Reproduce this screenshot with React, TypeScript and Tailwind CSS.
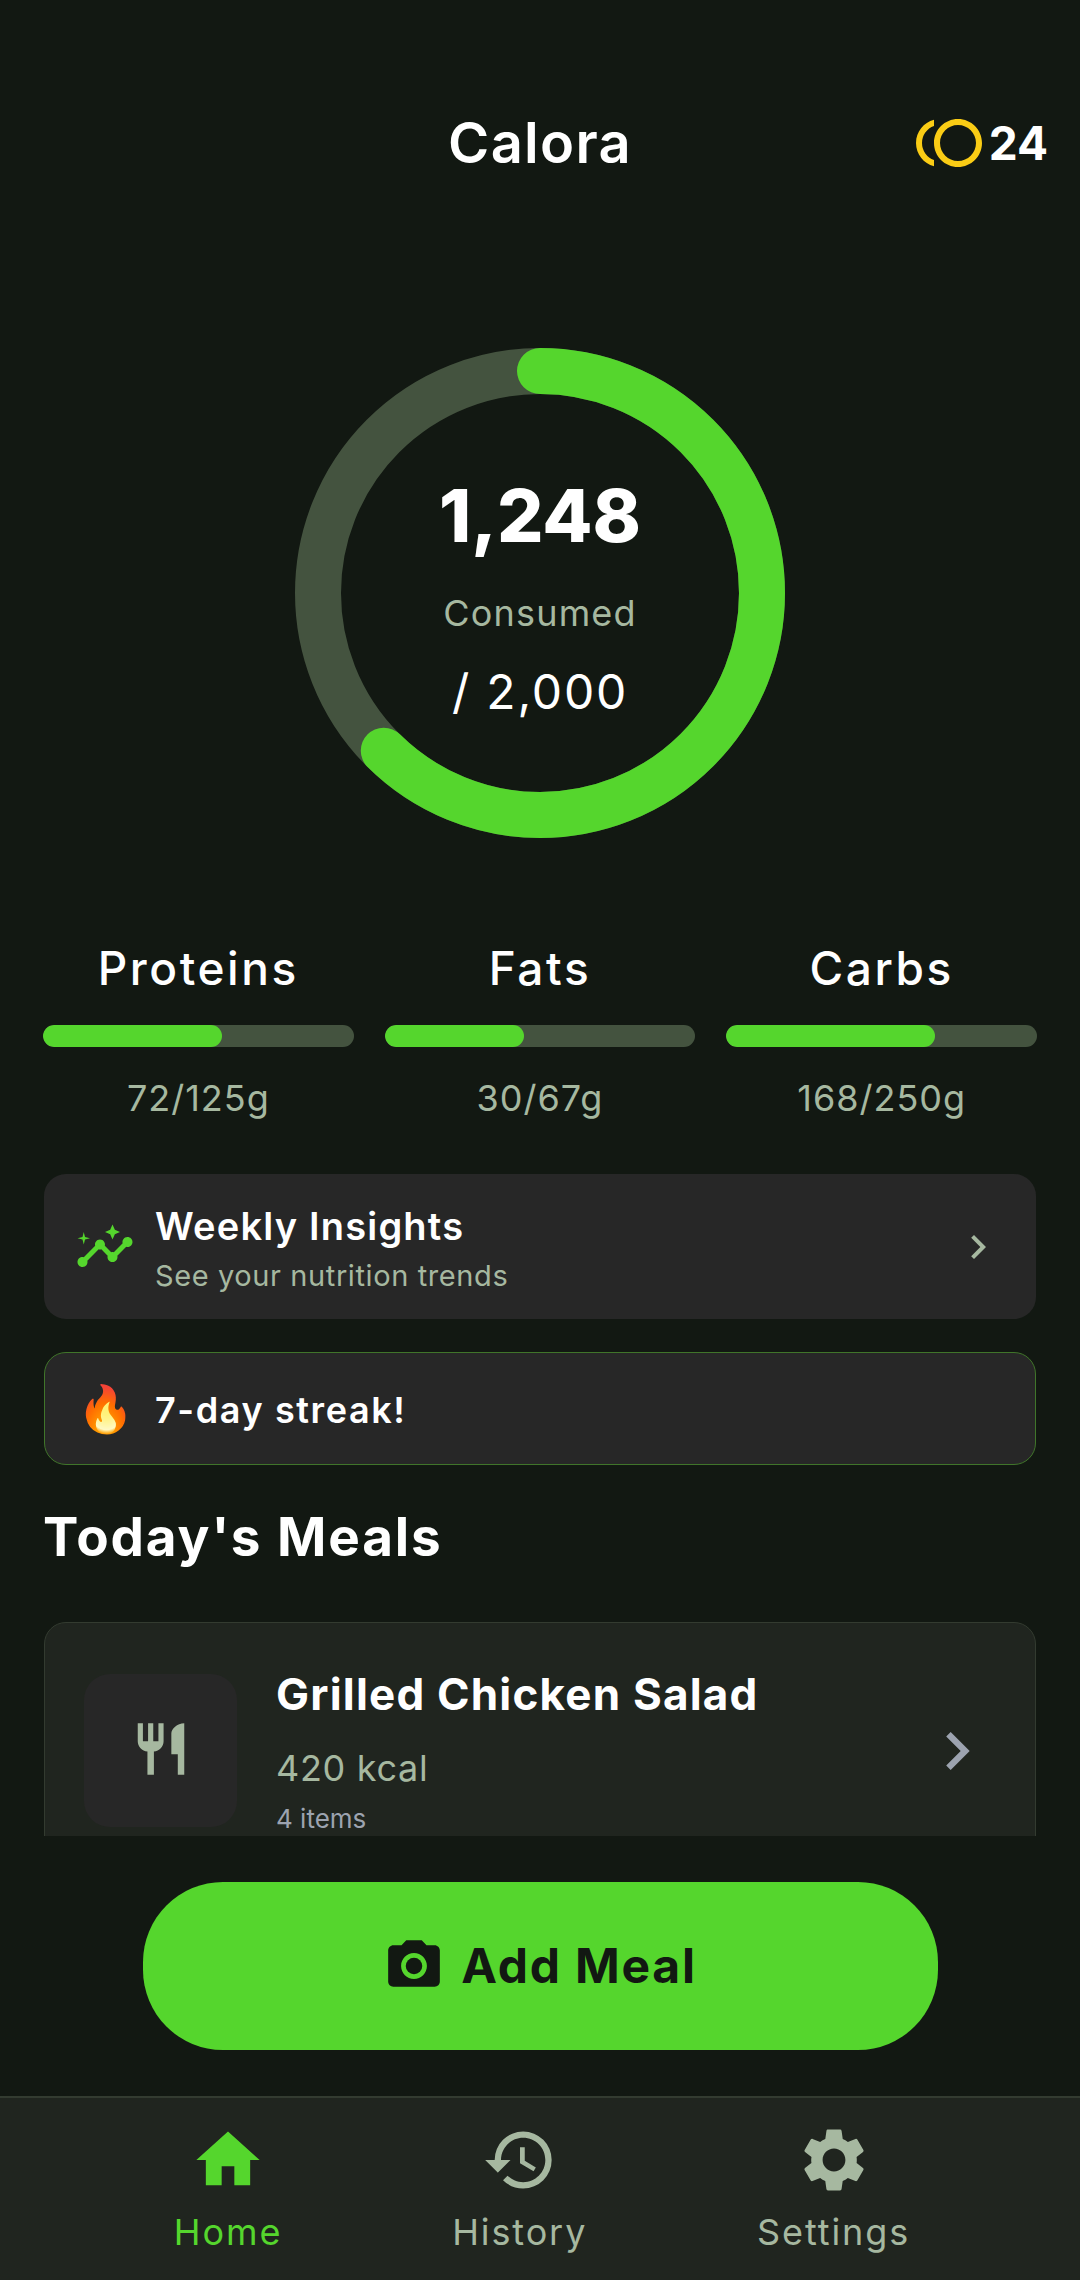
import React from "react";
import { MdToll, MdInsights, MdChevronRight, MdRestaurant, MdCameraAlt, MdHome, MdHistory, MdSettings } from "react-icons/md";

function Macro({ name, value, pct }: { name: string; value: string; pct: number }) {
  return (
    <div className="flex flex-1 flex-col items-center">
      <div className="h-[48px] text-[46px] leading-[48px] font-medium tracking-[2.6px] text-white">{name}</div>
      <div className="mt-[33px] h-[22px] w-full overflow-hidden rounded-full bg-[#44533f]">
        <div className="h-full rounded-full bg-[#55d62d]" style={{ width: `${pct}%` }} />
      </div>
      <div className="mt-[29px] h-[44px] text-[36px] leading-[44px] font-normal tracking-[1px] text-[#a6b8a0]">{value}</div>
    </div>
  );
}

function NavItem({ icon, label, active }: { icon: React.ReactNode; label: string; active?: boolean }) {
  return (
    <div className={`flex flex-col items-center ${active ? "text-[#55d62d]" : "text-[#a6b8a0]"}`}>
      {icon}
      <span className="mt-[12px] text-[36px] leading-[44px] tracking-[1.9px]">{label}</span>
    </div>
  );
}

export default function App() {
  const r = 222;
  const c = 2 * Math.PI * r;
  return (
    <div className='flex h-[2280px] w-[1080px] flex-col overflow-hidden bg-[#121812] [font-family:Inter,"Noto_Sans",sans-serif]'>
      <div className="h-[1836px] shrink-0 overflow-hidden">
        <header className="grid h-[286px] grid-cols-[1fr_auto_1fr] items-center">
          <div />
          <h1 className="text-[56px] font-semibold tracking-[1.3px] text-white">Calora</h1>
          <div className="flex items-center justify-self-end pr-[32px]">
            <MdToll size={72} className="text-[#facc15]" />
            <span className="ml-[4px] text-[46px] font-bold text-white">24</span>
          </div>
        </header>

        <div className="relative mx-auto mt-[62px] h-[490px] w-[490px]">
          <svg width="490" height="490" viewBox="0 0 490 490">
            <circle cx="245" cy="245" r={r} fill="none" stroke="#44533f" strokeWidth="46" />
            <circle
              cx="245"
              cy="245"
              r={r}
              fill="none"
              stroke="#55d62d"
              strokeWidth="46"
              strokeLinecap="round"
              strokeDasharray={`${c * 0.624} ${c}`}
              transform="rotate(-90 245 245)"
            />
          </svg>
          <div className="absolute inset-0 flex flex-col items-center">
            <div className="mt-[128px] h-[80px] text-[73px] leading-[80px] font-extrabold text-white">1,248</div>
            <div className="mt-[35px] h-[44px] text-[36px] leading-[44px] font-normal tracking-[1.2px] text-[#a6b8a0]">Consumed</div>
            <div className="mt-[29px] h-[56px] text-[48px] leading-[56px] font-normal tracking-[1.8px] text-white">/ 2,000</div>
          </div>
        </div>

        <div className="mt-[106px] flex gap-[31px] px-[43px]">
          <Macro name="Proteins" value="72/125g" pct={57.6} />
          <Macro name="Fats" value="30/67g" pct={44.8} />
          <Macro name="Carbs" value="168/250g" pct={67.2} />
        </div>

        <div className="mx-[44px] mt-[54px] flex h-[145px] items-center rounded-[22px] bg-[#272727] pr-[34px] pl-[31px]">
          <MdInsights size={60} className="text-[#55d62d]" />
          <div className="ml-[20px] flex-1 pt-[4px]">
            <div className="text-[38px] leading-[46px] font-semibold tracking-[1.2px] text-white">Weekly Insights</div>
            <div className="mt-[9px] text-[29px] leading-[36px] font-normal tracking-[0.6px] text-[#a6b8a0]">See your nutrition trends</div>
          </div>
          <MdChevronRight size={48} className="text-[#a6b8a0]" />
        </div>

        <div className="mx-[44px] mt-[33px] flex h-[113px] items-center rounded-[22px] border border-[#40752a] bg-[#272727] pl-[32px]">
          <span className='w-[58px] text-center text-[46px] leading-none [font-family:"Noto_Color_Emoji",sans-serif]'>🔥</span>
          <div className="mt-[2px] ml-[20px] text-[36px] font-semibold tracking-[1.6px] text-white">7-day streak!</div>
        </div>

        <h2 className="mt-[42px] ml-[43px] h-[60px] text-[53px] leading-[60px] font-bold tracking-[1.9px] text-white">Today's Meals</h2>

        <div className="mx-[44px] mt-[55px] flex h-[300px] items-start rounded-[22px] border border-[#333b30] bg-[#20251f] pr-[40px] pl-[39px]">
          <div className="mt-[51px] flex h-[153px] w-[153px] shrink-0 items-center justify-center rounded-[26px] bg-[#272727]">
            <MdRestaurant size={62} className="mb-[4px] text-[#a6b8a0]" />
          </div>
          <div className="ml-[39px] flex-1">
            <div className="mt-[44px] h-[54px] text-[44px] leading-[54px] font-bold tracking-[1.2px] text-white">Grilled Chicken Salad</div>
            <div className="mt-[23px] h-[48px] text-[36px] leading-[48px] font-normal tracking-[0.7px] text-[#a6b8a0]">420 kcal</div>
            <div className="mt-[11px] h-[32px] text-[26px] leading-[32px] font-normal text-[#9ca3af]">4 items</div>
          </div>
          <MdChevronRight size={76} className="mt-[90px] text-[#9ca3af]" />
        </div>
      </div>

      <div className="flex flex-1 items-start justify-center pt-[46px]">
        <button className="flex h-[168px] w-[795px] items-center justify-center rounded-[80px] bg-[#55d62d] text-[#121812]">
          <MdCameraAlt size={62} />
          <span className="ml-[16px] text-[48px] font-bold tracking-[1.8px]">Add Meal</span>
        </button>
      </div>

      <nav className="flex h-[184px] shrink-0 items-start justify-evenly border-t-2 border-[#333b30] bg-[#20251f] pt-[24px] pl-[4px]">
        <NavItem icon={<MdHome size={76} />} label="Home" active />
        <NavItem icon={<MdHistory size={76} />} label="History" />
        <NavItem icon={<MdSettings size={76} />} label="Settings" />
      </nav>
    </div>
  );
}
